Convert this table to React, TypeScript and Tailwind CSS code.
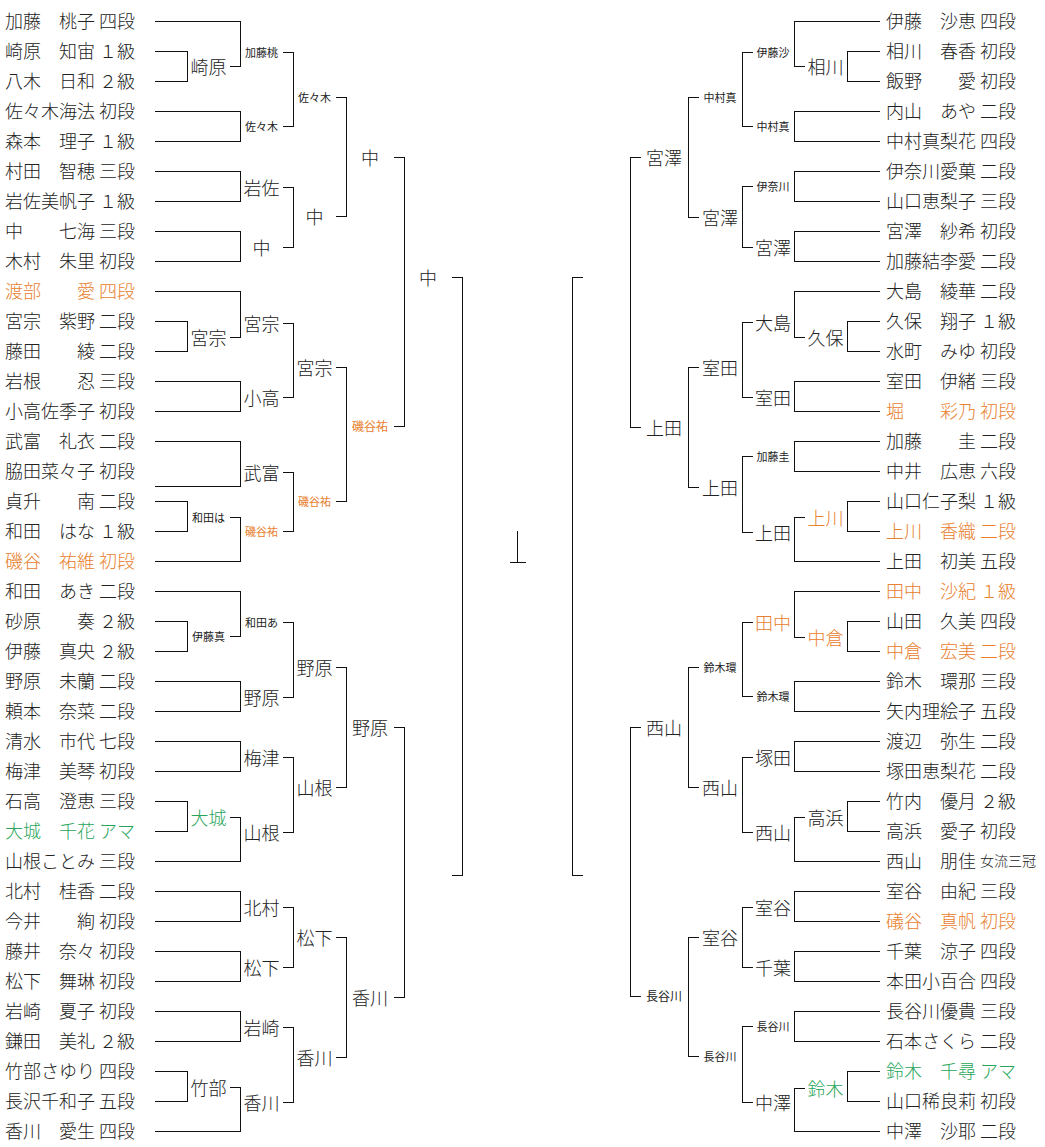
import React from 'react';

type Kind = 'o' | 'g' | undefined;
type P = { p: number; y?: number };
type M = { c: number; y: number; t: string; ch: N[]; s?: number; k?: Kind };
type N = P | M;
type Seg = [number, number, number, number];
type Lbl = { x1: number; x2: number; y: number; t: string; s?: number; k?: Kind };

type Player = { a: string; b: string; r: string; k?: Kind; small?: boolean };

// x of each round's vertical connector
const LV = [187, 240, 293, 346, 404, 462];
const RV = [847, 794, 742, 688, 630, 572];
const LEFT_EDGE = 155;
const RIGHT_EDGE = 880;

const p = (i: number, y?: number): P => ({ p: i, y });
const m = (c: number, y: number, t: string, ch: N[], o: { s?: number; k?: Kind } = {}): M => ({ c, y, t, ch, ...o });
const S = { s: 11 };
const SO = { s: 11, k: 'o' as Kind };

const leftPlayers: Player[] = [
  { a: '加藤', b: '桃子', r: '四段' },
  { a: '崎原', b: '知宙', r: '１級' },
  { a: '八木', b: '日和', r: '２級' },
  { a: '佐々木', b: '海法', r: '初段' },
  { a: '森本', b: '理子', r: '１級' },
  { a: '村田', b: '智穂', r: '三段' },
  { a: '岩佐', b: '美帆子', r: '１級' },
  { a: '中', b: '七海', r: '三段' },
  { a: '木村', b: '朱里', r: '初段' },
  { a: '渡部', b: '愛', r: '四段', k: 'o' },
  { a: '宮宗', b: '紫野', r: '二段' },
  { a: '藤田', b: '綾', r: '二段' },
  { a: '岩根', b: '忍', r: '三段' },
  { a: '小高', b: '佐季子', r: '初段' },
  { a: '武富', b: '礼衣', r: '二段' },
  { a: '脇田', b: '菜々子', r: '初段' },
  { a: '貞升', b: '南', r: '二段' },
  { a: '和田', b: 'はな', r: '１級' },
  { a: '磯谷', b: '祐維', r: '初段', k: 'o' },
  { a: '和田', b: 'あき', r: '二段' },
  { a: '砂原', b: '奏', r: '２級' },
  { a: '伊藤', b: '真央', r: '２級' },
  { a: '野原', b: '未蘭', r: '二段' },
  { a: '頼本', b: '奈菜', r: '二段' },
  { a: '清水', b: '市代', r: '七段' },
  { a: '梅津', b: '美琴', r: '初段' },
  { a: '石高', b: '澄恵', r: '三段' },
  { a: '大城', b: '千花', r: 'アマ', k: 'g' },
  { a: '山根', b: 'ことみ', r: '三段' },
  { a: '北村', b: '桂香', r: '二段' },
  { a: '今井', b: '絢', r: '初段' },
  { a: '藤井', b: '奈々', r: '初段' },
  { a: '松下', b: '舞琳', r: '初段' },
  { a: '岩崎', b: '夏子', r: '初段' },
  { a: '鎌田', b: '美礼', r: '２級' },
  { a: '竹部', b: 'さゆり', r: '四段' },
  { a: '長沢', b: '千和子', r: '五段' },
  { a: '香川', b: '愛生', r: '四段' },
];

const rightPlayers: Player[] = [
  { a: '伊藤', b: '沙恵', r: '四段' },
  { a: '相川', b: '春香', r: '初段' },
  { a: '飯野', b: '愛', r: '初段' },
  { a: '内山', b: 'あや', r: '二段' },
  { a: '中村', b: '真梨花', r: '四段' },
  { a: '伊奈川', b: '愛菓', r: '二段' },
  { a: '山口', b: '恵梨子', r: '三段' },
  { a: '宮澤', b: '紗希', r: '初段' },
  { a: '加藤', b: '結李愛', r: '二段' },
  { a: '大島', b: '綾華', r: '二段' },
  { a: '久保', b: '翔子', r: '１級' },
  { a: '水町', b: 'みゆ', r: '初段' },
  { a: '室田', b: '伊緒', r: '三段' },
  { a: '堀', b: '彩乃', r: '初段', k: 'o' },
  { a: '加藤', b: '圭', r: '二段' },
  { a: '中井', b: '広恵', r: '六段' },
  { a: '山口', b: '仁子梨', r: '１級' },
  { a: '上川', b: '香織', r: '二段', k: 'o' },
  { a: '上田', b: '初美', r: '五段' },
  { a: '田中', b: '沙紀', r: '１級', k: 'o' },
  { a: '山田', b: '久美', r: '四段' },
  { a: '中倉', b: '宏美', r: '二段', k: 'o' },
  { a: '鈴木', b: '環那', r: '三段' },
  { a: '矢内', b: '理絵子', r: '五段' },
  { a: '渡辺', b: '弥生', r: '二段' },
  { a: '塚田', b: '恵梨花', r: '二段' },
  { a: '竹内', b: '優月', r: '２級' },
  { a: '高浜', b: '愛子', r: '初段' },
  { a: '西山', b: '朋佳', r: '女流三冠', small: true },
  { a: '室谷', b: '由紀', r: '三段' },
  { a: '礒谷', b: '真帆', r: '初段', k: 'o' },
  { a: '千葉', b: '涼子', r: '四段' },
  { a: '本田', b: '小百合', r: '四段' },
  { a: '長谷川', b: '優貴', r: '三段' },
  { a: '石本', b: 'さくら', r: '二段' },
  { a: '鈴木', b: '千尋', r: 'アマ', k: 'g' },
  { a: '山口', b: '稀良莉', r: '初段' },
  { a: '中澤', b: '沙耶', r: '二段' },
];

const leftTree: M = m(5, 0, '', [
  m(4, 277, '中', [
    m(3, 157, '中', [
      m(2, 97, '佐々木', [
        m(1, 52, '加藤桃', [p(0), m(0, 66, '崎原', [p(1), p(2)])], S),
        m(1, 126, '佐々木', [p(3), p(4)], S),
      ], S),
      m(2, 216, '中', [
        m(1, 187, '岩佐', [p(5), p(6)]),
        m(1, 247, '中', [p(7), p(8)]),
      ]),
    ]),
    m(3, 426, '磯谷祐', [
      m(2, 367, '宮宗', [
        m(1, 323, '宮宗', [p(9), m(0, 337, '宮宗', [p(10), p(11)])]),
        m(1, 397, '小高', [p(12), p(13)]),
      ]),
      m(2, 501, '磯谷祐', [
        m(1, 472, '武富', [p(14), p(15, 486)]),
        m(1, 531, '磯谷祐', [m(0, 517, '和田は', [p(16), p(17)], S), p(18)], SO),
      ], SO),
    ], { s: 12, k: 'o' }),
  ]),
  m(4, 875, '', [
    m(3, 727, '野原', [
      m(2, 667, '野原', [
        m(1, 622, '和田あ', [p(19), m(0, 636, '伊藤真', [p(20), p(21)], S)], S),
        m(1, 697, '野原', [p(22), p(23)]),
      ]),
      m(2, 787, '山根', [
        m(1, 757, '梅津', [p(24), p(25)]),
        m(1, 832, '山根', [m(0, 817, '大城', [p(26), p(27)], { k: 'g' }), p(28)]),
      ]),
    ]),
    m(3, 997, '香川', [
      m(2, 937, '松下', [
        m(1, 907, '北村', [p(29), p(30)]),
        m(1, 967, '松下', [p(31), p(32)]),
      ]),
      m(2, 1057, '香川', [
        m(1, 1027, '岩崎', [p(33), p(34)]),
        m(1, 1102, '香川', [m(0, 1087, '竹部', [p(35), p(36)]), p(37)]),
      ]),
    ]),
  ]),
]);

const rightTree: M = m(5, 0, '', [
  m(4, 277, '', [
    m(3, 157, '宮澤', [
      m(2, 97, '中村真', [
        m(1, 52, '伊藤沙', [p(0), m(0, 66, '相川', [p(1), p(2)])], S),
        m(1, 126, '中村真', [p(3), p(4)], S),
      ], S),
      m(2, 217, '宮澤', [
        m(1, 186, '伊奈川', [p(5), p(6)], S),
        m(1, 247, '宮澤', [p(7), p(8)]),
      ]),
    ]),
    m(3, 427, '上田', [
      m(2, 367, '室田', [
        m(1, 322, '大島', [p(9), m(0, 337, '久保', [p(10), p(11)])]),
        m(1, 397, '室田', [p(12), p(13)]),
      ]),
      m(2, 487, '上田', [
        m(1, 456, '加藤圭', [p(14), p(15)], S),
        m(1, 532, '上田', [m(0, 517, '上川', [p(16), p(17)], { k: 'o' }), p(18)]),
      ]),
    ]),
  ]),
  m(4, 875, '', [
    m(3, 727, '西山', [
      m(2, 667, '鈴木環', [
        m(1, 622, '田中', [p(19), m(0, 637, '中倉', [p(20), p(21)], { k: 'o' })], { k: 'o' }),
        m(1, 696, '鈴木環', [p(22), p(23)], S),
      ], S),
      m(2, 787, '西山', [
        m(1, 757, '塚田', [p(24), p(25)]),
        m(1, 832, '西山', [m(0, 817, '高浜', [p(26), p(27)]), p(28)]),
      ]),
    ]),
    m(3, 996, '長谷川', [
      m(2, 937, '室谷', [
        m(1, 907, '室谷', [p(29), p(30)]),
        m(1, 967, '千葉', [p(31), p(32)]),
      ]),
      m(2, 1056, '長谷川', [
        m(1, 1026, '長谷川', [p(33), p(34)], S),
        m(1, 1102, '中澤', [m(0, 1088, '鈴木', [p(35), p(36)], { k: 'g' }), p(37)]),
      ], S),
    ], { s: 12 }),
  ]),
]);

function walk(n: N, side: 'L' | 'R', parentC: number | null, segs: Seg[], lbls: Lbl[]): number {
  const V = side === 'L' ? LV : RV;
  if ('p' in n) {
    const y = n.y ?? 21 + 30 * n.p;
    const px = V[parentC as number];
    segs.push(side === 'L' ? [LEFT_EDGE, y, px, y] : [px, y, RIGHT_EDGE, y]);
    return y;
  }
  const ys = n.ch.map((ch) => walk(ch, side, n.c, segs, lbls));
  const vx = V[n.c];
  segs.push([vx, Math.min(...ys), vx, Math.max(...ys)]);
  if (parentC !== null) {
    const px = V[parentC];
    if (side === 'L') {
      segs.push([px - 10, n.y, px, n.y]);
      if (n.t) lbls.push({ x1: vx, x2: px - 10, y: n.y, t: n.t, s: n.s, k: n.k });
    } else {
      segs.push([px, n.y, px + 10, n.y]);
      if (n.t) lbls.push({ x1: px + 10, x2: vx, y: n.y, t: n.t, s: n.s, k: n.k });
    }
  }
  return n.y;
}

const segs: Seg[] = [];
const lbls: Lbl[] = [];
walk(leftTree, 'L', null, segs, lbls);
walk(rightTree, 'R', null, segs, lbls);
// final stub in the middle
segs.push([517, 531, 517, 562]);
segs.push([510, 562, 525, 562]);

const tone = (k: Kind) => (k === 'o' ? 'text-[#e8802e]' : k === 'g' ? 'text-[#27a55a]' : 'text-[#222222]');

function NameRow({ pl }: { pl: Player }) {
  return (
    <div className={`flex h-[30px] items-center text-[18px] leading-none ${tone(pl.k)}`}>
      <div className="flex w-[90px] justify-between">
        <span>{pl.a}</span>
        <span>{pl.b}</span>
      </div>
      <span className={`ml-[4px] whitespace-nowrap ${pl.small ? 'text-[14px]' : ''}`}>{pl.r}</span>
    </div>
  );
}

export default function App() {
  return (
    <div className="flex h-[1147px] w-[1045px] bg-white font-['Noto_Sans_CJK_JP','Noto_Sans',sans-serif] font-light">
      <div className="flex w-[155px] flex-col pl-[5px] pt-[5px]">
        {leftPlayers.map((pl, i) => (
          <NameRow key={i} pl={pl} />
        ))}
      </div>

      <div className="relative h-full w-[725px]">
        <svg width={725} height={1147} viewBox="155 0 725 1147" className="absolute inset-0" shapeRendering="crispEdges">
          {segs.map(([x1, y1, x2, y2], i) =>
            x1 === x2 ? (
              <line key={i} x1={x1 + 0.5} y1={y1} x2={x2 + 0.5} y2={y2 + 1} stroke="#111" strokeWidth={1} />
            ) : (
              <line key={i} x1={x1} y1={y1 + 0.5} x2={x2 + 1} y2={y2 + 0.5} stroke="#111" strokeWidth={1} />
            )
          )}
        </svg>
        {lbls.map((l, i) => (
          <div
            key={i}
            className={`absolute flex h-[20px] items-center justify-center whitespace-nowrap leading-none ${tone(l.k)} ${
              l.s === 11 ? 'text-[11px] font-normal' : l.s === 12 ? 'text-[12px] font-normal' : 'text-[18px]'
            }`}
            style={{ left: l.x1 - LEFT_EDGE, width: l.x2 - l.x1, top: l.y - 10 }}
          >
            {l.t}
          </div>
        ))}
      </div>

      <div className="flex flex-1 flex-col pl-[6px] pt-[5px]">
        {rightPlayers.map((pl, i) => (
          <NameRow key={i} pl={pl} />
        ))}
      </div>
    </div>
  );
}
